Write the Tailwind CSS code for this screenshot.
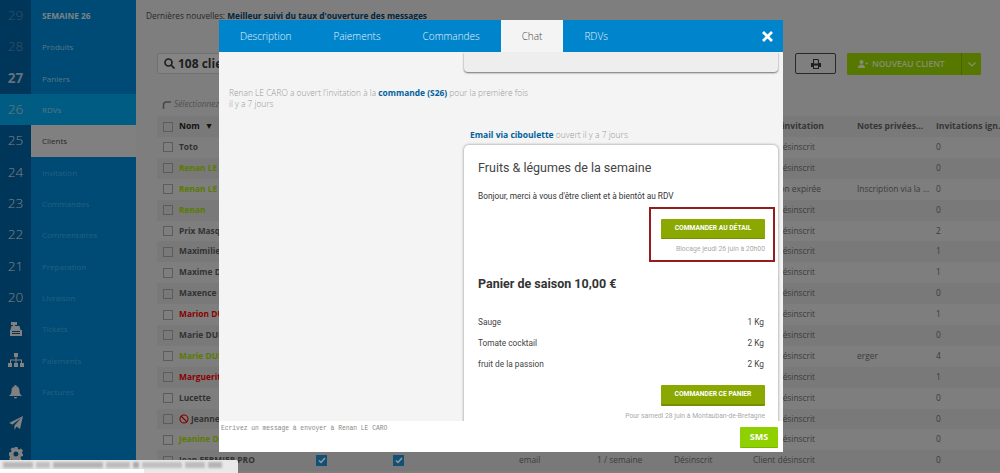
<!DOCTYPE html>
<html lang="en">
<head>
    <meta charset="UTF-8">
    <title>Clients</title>
    <script src="https://cdn.jsdelivr.net/npm/@tailwindcss/browser@4"></script>
</head>
<body class="relative h-[473px] w-[1000px] overflow-hidden bg-[#d2d2d2] font-['Open_Sans',sans-serif] text-[#666]">

  <div class="flex h-[473px]">
    <!-- sidebar -->
    <aside class="flex w-[136px] shrink-0 bg-[#007dc3]">
      <ul class="w-[31px] shrink-0 bg-[#005a96] text-center text-[13.500px] font-light leading-[31.35px] text-[#d8d8d8]">
        <li class="text-[#5a8aaa]">29</li>
        <li class="text-[#5a8aaa]">28</li>
        <li class="font-bold text-[#a8bccb]">27</li>
        <li class="w-[136px] bg-[#009ad9] text-left"><span class="inline-block w-[31px] text-center text-[#c8c8c8]">26</span></li>
        <li>25</li>
        <li>24</li>
        <li>23</li>
        <li>22</li>
        <li>21</li>
        <li>20</li>
        <li class="flex h-[31.35px] items-center justify-center">
          <svg class="h-[14px] w-[14px]" viewBox="0 0 14 14" fill="#d8d8d8"><path d="M2 0h6v3H6v1h4.500l1 4H13v6H1V8h.5l1-4H4V3H2z"/><path d="M3 9h8v1H3zM3 11h8v1H3z" fill="#005a96"/></svg>
        </li>
        <li class="flex h-[31.35px] items-center justify-center">
          <svg class="h-[15px] w-[16px]" viewBox="0 0 16 15" fill="#d8d8d8"><path d="M6 0h4v4H8.500v2.500H14V10h-1V7.500H8.500V10h-1V7.500H3V10H2V6.500h5.500V4H6z"/><path d="M0 10h4v4H0zM6 10h4v4H6zM12 10h4v4h-4z"/></svg>
        </li>
        <li class="flex h-[31.35px] items-center justify-center">
          <svg class="h-[14px] w-[13px]" viewBox="0 0 13 14" fill="#d8d8d8"><path d="M6.500 0a1 1 0 0 1 1 1.200C9.700 1.700 10.500 3.500 10.500 6c0 2.500 1 3.500 2.500 5H0c1.500-1.500 2.500-2.500 2.500-5 0-2.500.8-4.300 3-4.800A1 1 0 0 1 6.500 0zM5 12h3a1.500 1.500 0 0 1-3 0z"/></svg>
        </li>
        <li class="flex h-[31.35px] items-center justify-center">
          <svg class="h-[14px] w-[14px]" viewBox="0 0 14 14" fill="#d8d8d8"><path d="M14 0 11 13 7.500 10.500 5.500 14V9.500L12 2 3.500 8.500 0 7z"/></svg>
        </li>
        <li class="flex h-[31.35px] items-center justify-center">
          <svg class="h-[14px] w-[14px]" viewBox="0 0 14 14" fill="#d8d8d8"><path fill-rule="evenodd" d="M5.500 0h3l.4 2 1.300.6L12 1.500 14 3.700l-1.100 1.700.5 1.300 .6.300v2l-2 .4-.6 1.300 1.100 1.800-2 2-1.800-1.100-1.200.5-.4 1.100h-3l-.4-2-1.300-.6L2 14 0 12l1.100-1.800-.6-1.300L0 8.500v-3l2-.4.600-1.300L1.500 2 3.700.4l1.700 1.100zM7 4.500a2.500 2.500 0 1 0 0 5 2.500 2.500 0 0 0 0-5z"/></svg>
        </li>
      </ul>
      <ul class="w-[105px] shrink-0 text-[8px] leading-[31.35px] text-[#8fc3e2]">
        <li class="pl-[11px] text-[8.300px] font-bold text-[#cfd8de]">SEMAINE 26</li>
        <li class="pl-[11px]">Produits</li>
        <li class="pl-[11px]">Paniers</li>
        <li class="pl-[11px]">RDVs</li>
        <li class="bg-[#d6d6d6] pl-[11px] text-[#444]">Clients</li>
        <li class="pl-[11px] text-[#3f9ed6]">Invitation</li>
        <li class="pl-[11px] text-[#3f9ed6]">Commandes</li>
        <li class="pl-[11px] text-[#3f9ed6]">Commentaires</li>
        <li class="pl-[11px] text-[#3f9ed6]">Préparation</li>
        <li class="pl-[11px] text-[#3f9ed6]">Livraison</li>
        <li class="pl-[11px] text-[#3f9ed6]">Tickets</li>
        <li class="pl-[11px] text-[#3f9ed6]">Paiements</li>
        <li class="pl-[11px] text-[#3f9ed6]">Factures</li>
      </ul>
    </aside>

    <!-- main -->
    <main class="min-w-0 flex-1 bg-[#d2d2d2]">
      <p class="whitespace-nowrap pl-[10px] pt-[9px] text-[8.300px] leading-[14px] text-[#444]">Dernières nouvelles: <b class="text-[#00406b]">Meilleur suivi du taux d'ouverture des messages</b></p>

      <div class="mt-[30px] flex h-[22px] pl-[21px]">
        <div class="flex h-[21px] w-[200px] items-center gap-[3px] rounded-[2px] border border-[#bbb] bg-[#ddd] pl-[6px] text-[12px] font-bold text-[#333]">
          <svg class="h-[11px] w-[11px]" viewBox="0 0 11 11" fill="none" stroke="#333" stroke-width="1.700"><circle cx="4.500" cy="4.500" r="3.500"/><path d="m7 7 3.500 3.500"/></svg>
          108 clients
        </div>
        <div class="ml-[438px] flex h-[21px] w-[41px] items-center justify-center rounded-[2px] border border-[#444] bg-[#d4d4d4]">
          <svg class="h-[10px] w-[10px]" viewBox="0 0 10 10" fill="#333"><path d="M2 0h5l1 1v3h2v4H8v2H2V8H0V4h2zM3 1v3.500h4V1.500L6.500 1zM3 6.500V9h4V6.500z" fill-rule="evenodd"/></svg>
        </div>
        <div class="ml-[11px] flex h-[22px] w-[134px] items-center rounded-[1px] bg-[#8fc900] text-[8.500px] font-semibold text-[#e0e8c8]">
          <svg class="ml-[11px] h-[8px] w-[10px]" viewBox="0 0 10 8" fill="#e0e8c8"><circle cx="3.500" cy="2" r="2"/><path d="M0 8c0-2 1.500-3.500 3.500-3.500S7 6 7 8zM7.500 3h1V2h.7v1H10v.7H9.200v1h-.7v-1h-1z"/></svg>
          <span class="ml-[4px]">NOUVEAU CLIENT</span>
          <span class="ml-auto flex h-[22px] w-[20px] items-center justify-center border-l border-[#7aab00]">
            <svg class="h-[5px] w-[8px]" viewBox="0 0 8 5" fill="none" stroke="#e0e8c8" stroke-width="1.200"><path d="m.5.500 3.500 3.500L7.500.500"/></svg>
          </span>
        </div>
      </div>

      <div class="mt-[21px] flex h-[17px] items-center pl-[26px] text-[8.300px] italic text-[#888]">
        <svg class="mr-[3px] h-[9px] w-[9px]" viewBox="0 0 9 9" fill="none" stroke="#777" stroke-width="1.500"><path d="M1.500 9V5c0-2 1-3 3-3H9"/></svg>
        Sélectionnez
      </div>

      <div class="ml-[21px] mt-[3px] text-[8.400px] leading-[20.9px] text-[#666]">
        <div class="grid h-[21px] grid-cols-[22px_136px_77px_127px_78px_77px_79px_104px_79px_64px] items-center whitespace-nowrap bg-[#cacaca] text-[8.600px] font-bold text-[#5a5a5a]">
          <span class="ml-[6px] block h-[10px] w-[10px] border border-[#999]"></span>
          <span class="flex gap-[5px] text-[#222]">Nom <span>▼</span></span><span></span><span></span><span></span><span></span><span></span><span>Statut invitation</span><span>Notes privées...</span><span>Invitations ign.</span>
        </div>
        <div class="grid h-[20.9px] grid-cols-[22px_136px_77px_127px_78px_77px_79px_104px_79px_64px] items-center whitespace-nowrap">
          <span class="ml-[6px] block h-[10px] w-[10px] border border-[#999]"></span>
          <b class="text-[#555]">Toto</b><span></span><span></span><span></span><span></span><span></span><span>Client désinscrit</span><span></span><span>0</span>
        </div>
        <div class="grid h-[20.9px] grid-cols-[22px_136px_77px_127px_78px_77px_79px_104px_79px_64px] items-center whitespace-nowrap bg-[#cacaca]">
          <span class="ml-[6px] block h-[10px] w-[10px] border border-[#999]"></span>
          <b class="text-[#96cc00]">Renan LE CARO</b><span></span><span></span><span></span><span></span><span></span><span>Client désinscrit</span><span></span><span>0</span>
        </div>
        <div class="grid h-[20.9px] grid-cols-[22px_136px_77px_127px_78px_77px_79px_104px_79px_64px] items-center whitespace-nowrap">
          <span class="ml-[6px] block h-[10px] w-[10px] border border-[#999]"></span>
          <b class="text-[#96cc00]">Renan LE CARO</b><span></span><span></span><span></span><span></span><span></span><span>Invitation expirée</span><span>Inscription via la ...</span><span>0</span>
        </div>
        <div class="grid h-[20.9px] grid-cols-[22px_136px_77px_127px_78px_77px_79px_104px_79px_64px] items-center whitespace-nowrap bg-[#cacaca]">
          <span class="ml-[6px] block h-[10px] w-[10px] border border-[#999]"></span>
          <b class="text-[#96cc00]">Renan</b><span></span><span></span><span></span><span></span><span></span><span>Client désinscrit</span><span></span><span>0</span>
        </div>
        <div class="grid h-[20.9px] grid-cols-[22px_136px_77px_127px_78px_77px_79px_104px_79px_64px] items-center whitespace-nowrap">
          <span class="ml-[6px] block h-[10px] w-[10px] border border-[#999]"></span>
          <b class="text-[#555]">Prix Masqué</b><span></span><span></span><span></span><span></span><span></span><span>Client désinscrit</span><span></span><span>2</span>
        </div>
        <div class="grid h-[20.9px] grid-cols-[22px_136px_77px_127px_78px_77px_79px_104px_79px_64px] items-center whitespace-nowrap bg-[#cacaca]">
          <span class="ml-[6px] block h-[10px] w-[10px] border border-[#999]"></span>
          <b class="text-[#555]">Maximilien</b><span></span><span></span><span></span><span></span><span></span><span>Client désinscrit</span><span></span><span>1</span>
        </div>
        <div class="grid h-[20.9px] grid-cols-[22px_136px_77px_127px_78px_77px_79px_104px_79px_64px] items-center whitespace-nowrap">
          <span class="ml-[6px] block h-[10px] w-[10px] border border-[#999]"></span>
          <b class="text-[#555]">Maxime D</b><span></span><span></span><span></span><span></span><span></span><span>Client désinscrit</span><span></span><span>1</span>
        </div>
        <div class="grid h-[20.9px] grid-cols-[22px_136px_77px_127px_78px_77px_79px_104px_79px_64px] items-center whitespace-nowrap bg-[#cacaca]">
          <span class="ml-[6px] block h-[10px] w-[10px] border border-[#999]"></span>
          <b class="text-[#555]">Maxence D</b><span></span><span></span><span></span><span></span><span></span><span>Client désinscrit</span><span></span><span>0</span>
        </div>
        <div class="grid h-[20.9px] grid-cols-[22px_136px_77px_127px_78px_77px_79px_104px_79px_64px] items-center whitespace-nowrap">
          <span class="ml-[6px] block h-[10px] w-[10px] border border-[#999]"></span>
          <b class="text-[#e60000]">Marion DUBOIS</b><span></span><span></span><span></span><span></span><span></span><span>Client désinscrit</span><span></span><span>1</span>
        </div>
        <div class="grid h-[20.9px] grid-cols-[22px_136px_77px_127px_78px_77px_79px_104px_79px_64px] items-center whitespace-nowrap bg-[#cacaca]">
          <span class="ml-[6px] block h-[10px] w-[10px] border border-[#999]"></span>
          <b class="text-[#555]">Marie DUBOIS</b><span></span><span></span><span></span><span></span><span></span><span>Client désinscrit</span><span></span><span>0</span>
        </div>
        <div class="grid h-[20.9px] grid-cols-[22px_136px_77px_127px_78px_77px_79px_104px_79px_64px] items-center whitespace-nowrap">
          <span class="ml-[6px] block h-[10px] w-[10px] border border-[#999]"></span>
          <b class="text-[#96cc00]">Marie DUBOIS</b><span></span><span></span><span></span><span></span><span></span><span>Client désinscrit</span><span>erger</span><span>4</span>
        </div>
        <div class="grid h-[20.9px] grid-cols-[22px_136px_77px_127px_78px_77px_79px_104px_79px_64px] items-center whitespace-nowrap bg-[#cacaca]">
          <span class="ml-[6px] block h-[10px] w-[10px] border border-[#999]"></span>
          <b class="text-[#e60000]">Marguerite</b><span></span><span></span><span></span><span></span><span></span><span>Client désinscrit</span><span></span><span>1</span>
        </div>
        <div class="grid h-[20.9px] grid-cols-[22px_136px_77px_127px_78px_77px_79px_104px_79px_64px] items-center whitespace-nowrap">
          <span class="ml-[6px] block h-[10px] w-[10px] border border-[#999]"></span>
          <b class="text-[#555]">Lucette</b><span></span><span></span><span></span><span></span><span></span><span>Client désinscrit</span><span></span><span>0</span>
        </div>
        <div class="grid h-[20.9px] grid-cols-[22px_136px_77px_127px_78px_77px_79px_104px_79px_64px] items-center whitespace-nowrap bg-[#cacaca]">
          <span class="ml-[6px] block h-[10px] w-[10px] border border-[#999]"></span>
          <b class="flex items-center gap-[2px] text-[#555]"><svg class="h-[10px] w-[10px]" viewBox="0 0 10 10" fill="none" stroke="#d80000" stroke-width="1.100"><circle cx="5" cy="5" r="4"/><path d="m2 2 6 6"/></svg>Jeanne</b><span></span><span></span><span></span><span></span><span></span><span>Client désinscrit</span><span></span><span>0</span>
        </div>
        <div class="grid h-[20.9px] grid-cols-[22px_136px_77px_127px_78px_77px_79px_104px_79px_64px] items-center whitespace-nowrap">
          <span class="ml-[6px] block h-[10px] w-[10px] border border-[#999]"></span>
          <b class="text-[#96cc00]">Jeanine DUBOIS</b><span></span><span></span><span></span><span></span><span></span><span>Client désinscrit</span><span></span><span>0</span>
        </div>
        <div class="grid h-[20.9px] grid-cols-[22px_136px_77px_127px_78px_77px_79px_104px_79px_64px] items-center whitespace-nowrap bg-[#cacaca]">
          <span class="ml-[6px] block h-[10px] w-[10px] border border-[#999]"></span>
          <b class="text-[#555]">Jean FERMIER PRO</b>
          <span class="ml-[1px] flex h-[11px] w-[11px] items-center justify-center bg-[#1f86c4]"><svg class="h-[7px] w-[8px]" viewBox="0 0 8 7" fill="none" stroke="#fff" stroke-width="1.500"><path d="m1 3.500 2 2 4-4.500"/></svg></span>
          <span class="ml-[1px] flex h-[11px] w-[11px] items-center justify-center bg-[#1f86c4]"><svg class="h-[7px] w-[8px]" viewBox="0 0 8 7" fill="none" stroke="#fff" stroke-width="1.500"><path d="m1 3.500 2 2 4-4.500"/></svg></span>
          <span>email</span><span>1 / semaine</span><span>Désinscrit</span><span>Client désinscrit</span><span></span><span>0</span>
        </div>
      </div>
    </main>
  </div>

  <!-- dim layer -->
  <div class="absolute inset-0 bg-black/40"></div>

  <!-- modal -->
  <section class="absolute left-[219px] top-[20px] flex h-[432px] w-[564px] flex-col bg-[#f4f4f4] text-[#999]">
    <nav class="flex h-[32px] shrink-0 items-center bg-[#0085cc] text-[10px] font-light text-[#e2f1fa]">
      <a class="px-[21px] leading-[32px]">Description</a>
      <a class="px-[21px] leading-[32px]">Paiements</a>
      <a class="px-[21px] leading-[32px]">Commandes</a>
      <a class="bg-[#f4f4f4] px-[21px] leading-[32px] text-[#444]">Chat</a>
      <a class="px-[21px] leading-[32px]">RDVs</a>
      <svg class="ml-auto mr-[10px] h-[11px] w-[11px]" viewBox="0 0 11 11" fill="none" stroke="#fff" stroke-width="2.800"><path d="m1 1 9 9M10 1l-9 9"/></svg>
    </nav>

    <div class="min-h-0 flex-1 overflow-hidden">
      <div class="ml-[245px] h-[20px] w-[314px] rounded-b-[4px] bg-[#eeeeee] shadow-[0_1px_2px_rgba(0,0,0,0.55)]"></div>
      <p class="ml-[10px] mt-[15px] text-[8.400px] font-light leading-[11px]">Renan LE CARO a ouvert l'invitation à la <b class="font-bold text-[#00619c]">commande (S26)</b> pour la première fois<br>il y a 7 jours</p>
      <p class="ml-[251px] mt-[20px] text-[8.500px] font-light leading-[12px]"><b class="font-bold text-[#00619c]">Email via ciboulette</b> ouvert il y a 7 jours</p>

      <article class="ml-[245px] mt-[4px] h-[300px] w-[314px] rounded-[5px] bg-white px-[14px] font-['Roboto',sans-serif] shadow-[0_0_3px_rgba(0,0,0,0.45)]">
        <h2 class="pt-[14px] text-[12.500px] leading-[17px] text-[#444]">Fruits &amp; légumes de la semaine</h2>
        <p class="mt-[14px] text-[8.300px] leading-[12px] text-[#333]">Bonjour, merci à vous d'être client et à bientôt au RDV</p>
        <div class="relative">
          <div class="absolute left-[171px] top-[5px] h-[55px] w-[126px] border-2 border-[#951c1c]"></div>
          <div class="mr-[-1px] flex flex-col items-end">
            <button class="mt-[17px] flex h-[20px] w-[104px] items-center justify-center rounded-[1px] border-b border-[#758f00] bg-[#8aa800] text-[6.700px] font-bold text-white">COMMANDER AU DÉTAIL</button>
            <span class="mt-[4px] text-[6.850px] leading-[12px] text-[#aaa]">Blocage jeudi 26 juin à 20h00</span>
          </div>
        </div>
        <h3 class="mt-[20px] text-[12.500px] font-bold leading-[17px] text-[#333]">Panier de saison 10,00 €</h3>
        <ul class="mt-[20px] text-[8.300px] text-[#444]">
          <li class="flex h-[21px] items-center justify-between"><span>Sauge</span><span>1 Kg</span></li>
          <li class="flex h-[21px] items-center justify-between"><span>Tomate cocktail</span><span>2 Kg</span></li>
          <li class="flex h-[21px] items-center justify-between"><span>fruit de la passion</span><span>2 Kg</span></li>
        </ul>
        <div class="mr-[-1px] flex flex-col items-end">
          <button class="mt-[10px] flex h-[21px] w-[104px] items-center justify-center rounded-[1px] border-b-2 border-[#758f00] bg-[#8aa800] text-[6.700px] font-bold text-white">COMMANDER CE PANIER</button>
          <span class="mt-[4px] text-[6.800px] leading-[12px] text-[#aaa]">Pour samedi 28 juin à Montauban-de-Bretagne</span>
        </div>
      </article>
    </div>

    <footer class="relative z-10 flex h-[31px] shrink-0 bg-white">
      <span class="pl-[2px] pt-[3px] font-['Liberation_Mono',monospace] text-[6.300px] leading-[9px] text-[#888]">Ecrivez un message à envoyer à Renan LE CARO</span>
      <button class="ml-auto mr-[5px] mt-[6px] h-[21px] w-[38px] rounded-[1px] border-b border-[#7ab500] bg-[#8fd000] text-[9px] font-bold text-white">SMS</button>
    </footer>
  </section>

  <!-- blurred status bar -->
  <div class="absolute bottom-0 left-0 h-[13px] w-[238px] rounded-tr-[2px] bg-[#e9e9e9]">
    <div class="flex h-[9px] items-center gap-[3px] px-[3px]">
      <i class="h-[6px] w-[30px] bg-[#b8b8b8] blur-[1px]"></i><i class="h-[6px] w-[14px] bg-[#c0c0c0] blur-[1px]"></i><i class="h-[6px] w-[50px] bg-[#b4b4b4] blur-[1px]"></i><i class="h-[6px] w-[24px] bg-[#bcbcbc] blur-[1px]"></i><i class="h-[6px] w-[6px] bg-[#aaaaaa] blur-[1px]"></i><i class="h-[6px] w-[40px] bg-[#c0c0c0] blur-[1px]"></i><i class="h-[6px] w-[20px] bg-[#bcbcbc] blur-[1px]"></i><i class="h-[6px] w-[14px] bg-[#b4b4b4] blur-[1px]"></i>
    </div>
    <div class="h-[4px] w-[144px] bg-white"></div>
  </div>
</body>
</html>
